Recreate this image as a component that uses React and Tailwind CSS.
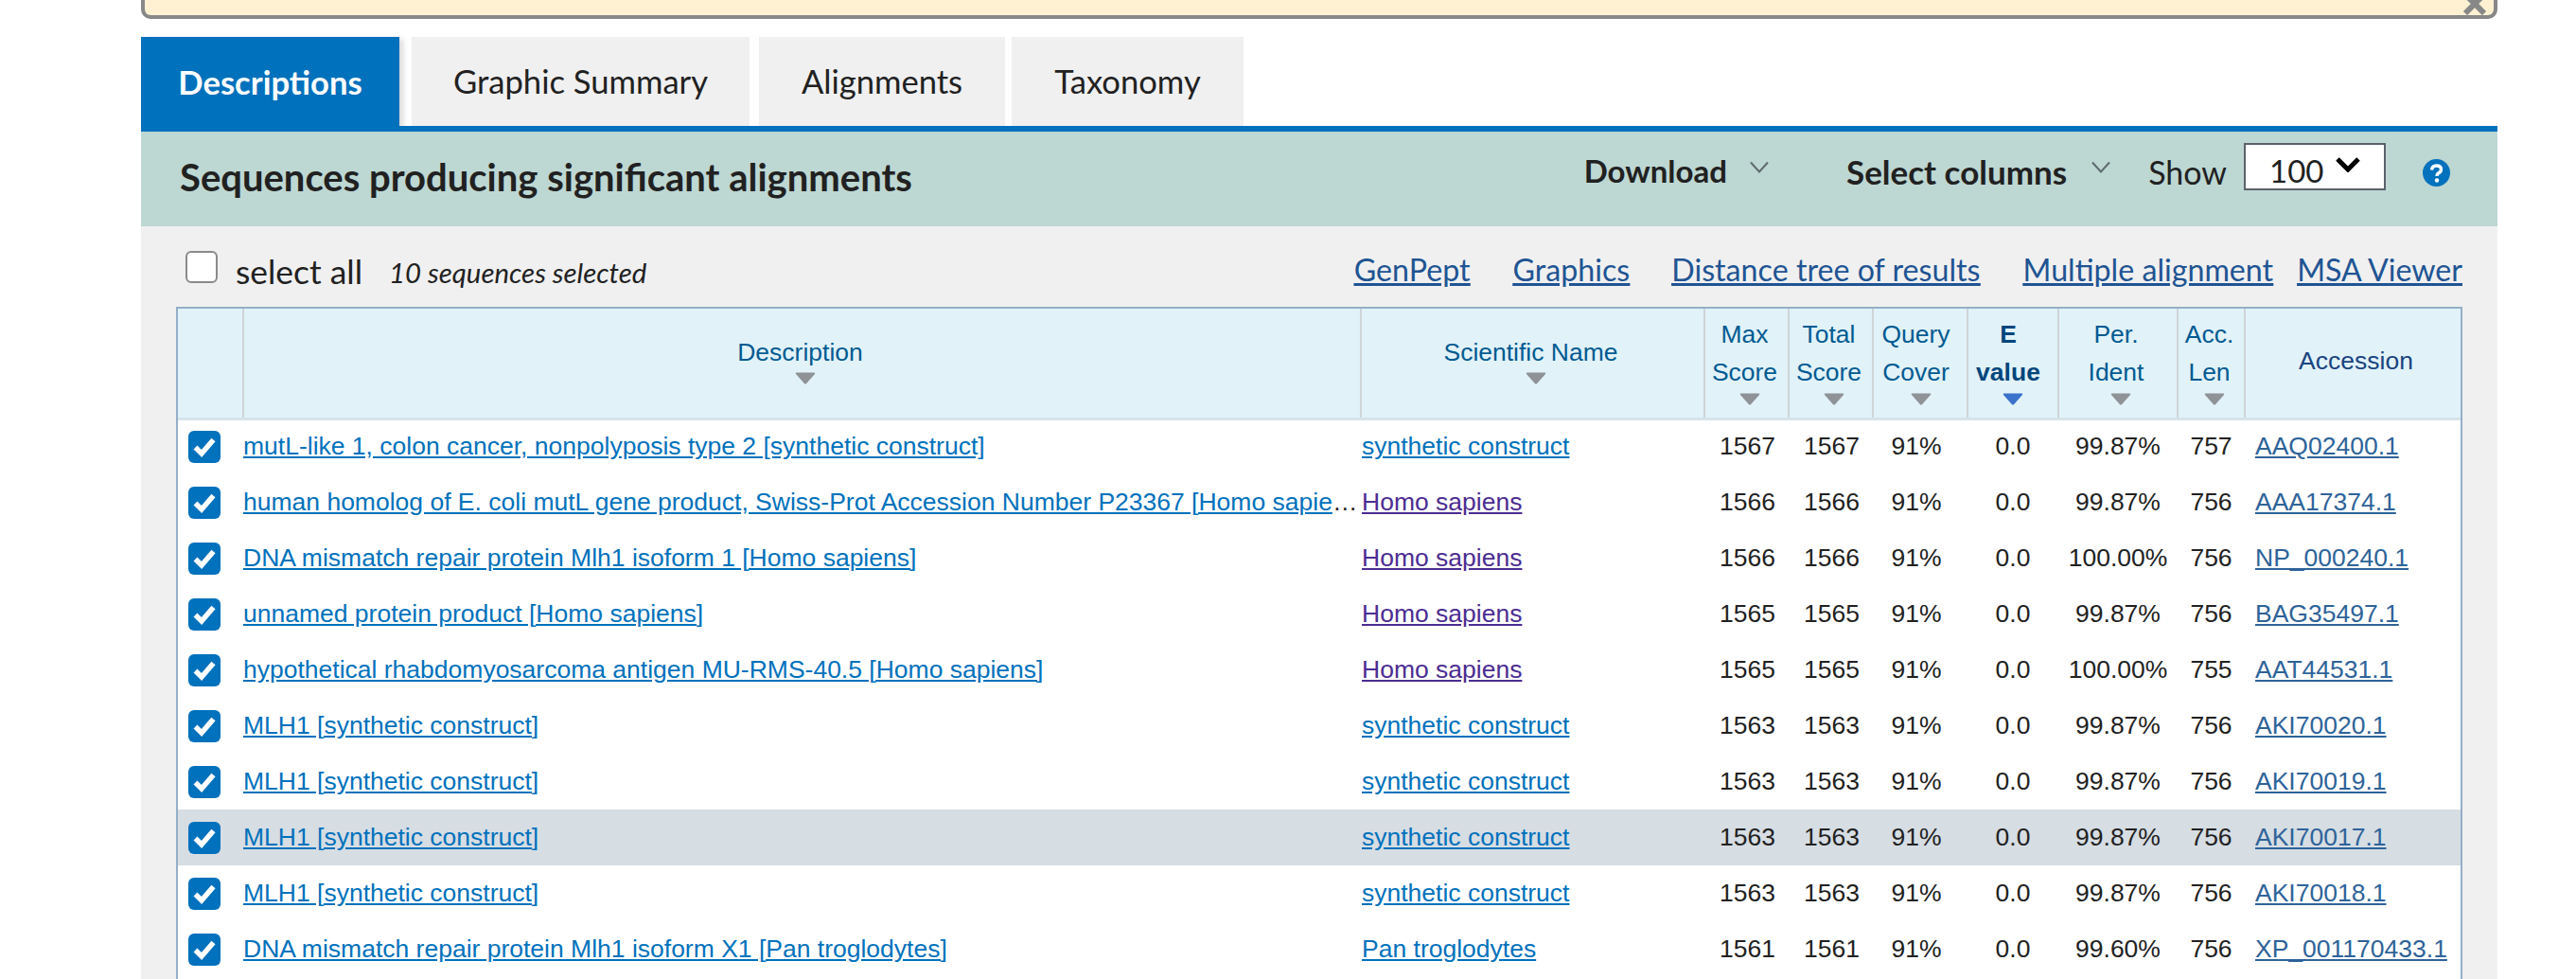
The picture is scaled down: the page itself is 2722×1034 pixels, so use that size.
const UI_FONT = "font-['Lato','Noto_Sans',sans-serif]";

// rows of the results table
const rows = [
  { desc: "mutL-like 1, colon cancer, nonpolyposis type 2 [synthetic construct]", sci: "synthetic construct", max: 1567, ident: "99.87%", len: 757, acc: "AAQ02400.1" },
  { desc: "human homolog of E. coli mutL gene product, Swiss-Prot Accession Number P23367 [Homo sapiens]", sci: "Homo sapiens", visited: true, max: 1566, ident: "99.87%", len: 756, acc: "AAA17374.1" },
  { desc: "DNA mismatch repair protein Mlh1 isoform 1 [Homo sapiens]", sci: "Homo sapiens", visited: true, max: 1566, ident: "100.00%", len: 756, acc: "NP_000240.1" },
  { desc: "unnamed protein product [Homo sapiens]", sci: "Homo sapiens", visited: true, max: 1565, ident: "99.87%", len: 756, acc: "BAG35497.1" },
  { desc: "hypothetical rhabdomyosarcoma antigen MU-RMS-40.5 [Homo sapiens]", sci: "Homo sapiens", visited: true, max: 1565, ident: "100.00%", len: 755, acc: "AAT44531.1" },
  { desc: "MLH1 [synthetic construct]", sci: "synthetic construct", max: 1563, ident: "99.87%", len: 756, acc: "AKI70020.1" },
  { desc: "MLH1 [synthetic construct]", sci: "synthetic construct", max: 1563, ident: "99.87%", len: 756, acc: "AKI70019.1" },
  { desc: "MLH1 [synthetic construct]", sci: "synthetic construct", max: 1563, ident: "99.87%", len: 756, acc: "AKI70017.1", hover: true },
  { desc: "MLH1 [synthetic construct]", sci: "synthetic construct", max: 1563, ident: "99.87%", len: 756, acc: "AKI70018.1" },
  { desc: "DNA mismatch repair protein Mlh1 isoform X1 [Pan troglodytes]", sci: "Pan troglodytes", max: 1561, ident: "99.60%", len: 756, acc: "XP_001170433.1" },
];

const Chevron = () => (
  <svg width="22" height="13" viewBox="0 0 22 13" fill="none" className="shrink-0">
    <path d="M2 1.5 L11 11.5 L20 1.5" stroke="#5f6b70" strokeWidth="2" />
  </svg>
);

const SortArrow = ({ active }) => (
  <svg width="22" height="13" viewBox="0 0 22 13" className="mx-auto block translate-x-[5px]">
    <path d="M1.5 0.5 H20.5 Q21.8 0.5 21 2 L12.2 12 Q11 13 9.8 12 L1 2 Q0.2 0.5 1.5 0.5 Z" fill={active ? "#3a72cc" : "#8f9296"} />
  </svg>
);

const CheckBox = () => (
  <span className="block h-[34px] w-[34px] rounded-[6px] bg-[#0071bc]">
    <svg width="34" height="34" viewBox="0 0 34 34" fill="none">
      <path d="M7.5 17.5 L14 24 L26.5 9.5" stroke="#fff" strokeWidth="5.5" />
    </svg>
  </span>
);

const HeadCell = ({ lines, bold, pad = "pr-1" }) => (
  <th className={`p-0 align-top text-center font-normal border-r-2 border-[#cfd4d6] ${pad} ${bold ? "text-[#00457c]" : "text-[#005a92]"}`}>
    <div className={`pt-[7px] leading-[40px] ${bold ? "font-bold" : ""}`}>
      {lines.map((l) => (
        <div key={l}>{l}</div>
      ))}
    </div>
    <div className="mt-[2px]">
      <SortArrow active={bold} />
    </div>
  </th>
);

export default function App() {
  return (
    <div className="h-[1034px] w-[2722px] overflow-hidden bg-white pl-[149px] pr-[83px]">
      <div className="flex h-full flex-col">
        {/* message banner, cut off by the top of the page */}
        <div className="relative h-[20px] shrink-0 overflow-hidden rounded-b-[10px] border-x-4 border-b-4 border-[#888888] bg-[#fff1d2]">
          <svg width="26" height="16" viewBox="0 0 26 16" className="absolute right-[7px] top-0">
            <path d="M3 -6 L23 14 M23 -6 L3 14" stroke="#888888" strokeWidth="6" />
          </svg>
        </div>

        {/* tabs */}
        <div className={`mt-[19px] flex h-[94px] shrink-0 text-[34.6px] text-[#212121] ${UI_FONT}`}>
          <div className="flex h-[100px] w-[273px] items-center justify-center bg-[#0071bc] pb-[4px] font-bold text-white shadow-[6px_0_6px_-2px_rgba(0,0,0,0.15)]">
            Descriptions
          </div>
          <div className="ml-[13px] flex w-[357px] items-center justify-center bg-[#f0f0f0]">Graphic Summary</div>
          <div className="ml-[10px] flex w-[260px] items-center justify-center bg-[#f0f0f0]">Alignments</div>
          <div className="ml-[7px] flex w-[245px] items-center justify-center bg-[#f0f0f0]">Taxonomy</div>
        </div>
        <div className="h-[6px] shrink-0 bg-[#0071bc]" />

        {/* title bar */}
        <div className={`flex h-[100px] shrink-0 items-start bg-[#bdd7d3] pl-[41px] text-[#212121] ${UI_FONT}`}>
          <h2 className="mt-[18px] text-[40px] font-bold">Sequences producing significant alignments</h2>
          <div className="ml-auto mt-[12px] flex items-start pr-[50px] text-[34px]">
            <span className="mt-[5px] text-[33px] font-bold">Download</span>
            <span className="ml-[23px] mt-[19px]"><Chevron /></span>
            <span className="ml-[81px] mt-[4px] text-[35px] font-bold">Select columns</span>
            <span className="ml-[25px] mt-[19px]"><Chevron /></span>
            <span className="ml-[39px] mt-[5px]">Show</span>
            <div className="ml-[18px] flex h-[50px] w-[150px] items-center border-2 border-[#5b616b] bg-white pl-[25px]">
              <span className="mt-[8px] text-[33px] leading-none">100</span>
              <svg width="28" height="16" viewBox="0 0 28 16" fill="none" className="ml-[12px] -mt-[4px]">
                <path d="M3 2 L14 13 L25 2" stroke="#000" strokeWidth="5" />
              </svg>
            </div>
            <svg width="29" height="29" viewBox="0 0 29 29" className="ml-[39px] mt-[17px]">
              <circle cx="14.5" cy="14.5" r="14.5" fill="#0071bc" />
              <path d="M9.5 11.5 Q10 7 14.5 7 Q19.5 7 19.5 11 Q19.5 13.5 16.5 15 Q15 16 15 18" fill="none" stroke="#fff" strokeWidth="3.4" />
              <circle cx="15" cy="22.5" r="2.2" fill="#fff" />
            </svg>
          </div>
        </div>

        <div className="flex min-h-0 flex-1 flex-col bg-[#f0f0f0] pl-[37px] pr-[37px]">
          {/* select all + links */}
          <div className={`relative flex h-[85px] shrink-0 items-start text-[#212121] ${UI_FONT}`}>
            <span className="ml-[10px] mt-[26px] block h-[34px] w-[34px] rounded-[6px] border-2 border-[#8a8a8a] bg-white" />
            <span className="ml-[19px] mt-[25px] text-[35.4px] leading-[46px]">select all</span>
            <span className="ml-[28px] mt-[30px] text-[29.4px] italic leading-[38px]">10 sequences selected</span>
            <div className="ml-auto mt-[23px] flex text-[32.2px] leading-[46px] text-[#205493] underline">
              <a>GenPept</a>
              <a className="ml-[45px]">Graphics</a>
              <a className="ml-[44px]">Distance tree of results</a>
              <a className="ml-[45px]">Multiple alignment</a>
              <a className="ml-[25px]">MSA Viewer</a>
            </div>
          </div>

          {/* results table */}
          <div className="min-h-0 flex-1 border-x-2 border-t-2 border-[#94afc9] bg-white font-['Liberation_Sans',Arial,sans-serif] text-[26.5px]">
            <table className="w-[2412px] table-fixed border-collapse">
              <colgroup>
                <col className="w-[69px]" />
                <col className="w-[1181px]" />
                <col className="w-[363px]" />
                <col className="w-[89px]" />
                <col className="w-[89px]" />
                <col className="w-[100px]" />
                <col className="w-[96px]" />
                <col className="w-[126px]" />
                <col className="w-[71px]" />
                <col className="w-[228px]" />
              </colgroup>
              <thead>
                <tr className="h-[116px] border-b-[3px] border-[#d6e3ea] bg-[#e1f2f9]">
                  <th className="border-r-2 border-[#cfd4d6] p-0" />
                  <th className="border-r-2 border-[#cfd4d6] p-0 pr-[4px] align-top font-normal text-[#005a92]">
                    <div className="pt-[26px] leading-[40px]">Description</div>
                    <div className="mt-[1px]"><SortArrow /></div>
                  </th>
                  <th className="border-r-2 border-[#cfd4d6] p-0 pr-[4px] align-top font-normal text-[#005a92]">
                    <div className="pt-[26px] leading-[40px]">Scientific Name</div>
                    <div className="mt-[1px]"><SortArrow /></div>
                  </th>
                  <HeadCell lines={["Max", "Score"]} />
                  <HeadCell lines={["Total", "Score"]} />
                  <HeadCell lines={["Query", "Cover"]} pad="pr-[9px]" />
                  <HeadCell lines={["E", "value"]} bold pad="pr-[10px]" />
                  <HeadCell lines={["Per.", "Ident"]} />
                  <HeadCell lines={["Acc.", "Len"]} />
                  <th className="p-0 pl-[6px] pb-[2px] text-center align-middle font-normal text-[#1a4480]">Accession</th>
                </tr>
              </thead>
              <tbody>
                {rows.map((r) => (
                  <tr key={r.acc} className={`h-[59px] text-[#212121] ${r.hover ? "bg-[#d6dde3]" : ""}`}>
                    <td className="p-0 pl-[11px]"><CheckBox /></td>
                    <td className="overflow-hidden text-ellipsis whitespace-nowrap p-0">
                      <a className="text-[#0071bc] underline">{r.desc}</a>
                    </td>
                    <td className="whitespace-nowrap p-0 pl-[1px]">
                      <a className={`underline ${r.visited ? "text-[#4c2c92]" : "text-[#0071bc]"}`}>{r.sci}</a>
                    </td>
                    <td className="p-0 pl-[2px] text-center">{r.max}</td>
                    <td className="p-0 pl-[2px] text-center">{r.max}</td>
                    <td className="p-0 pr-[8px] text-center">91%</td>
                    <td className="p-0 text-center">0.0</td>
                    <td className="p-0 text-center">{r.ident}</td>
                    <td className="p-0 text-center">{r.len}</td>
                    <td className="whitespace-nowrap p-0 pl-[11px]">
                      <a className="text-[#2e6399] underline">{r.acc}</a>
                    </td>
                  </tr>
                ))}
              </tbody>
            </table>
          </div>
        </div>
      </div>
    </div>
  );
}
